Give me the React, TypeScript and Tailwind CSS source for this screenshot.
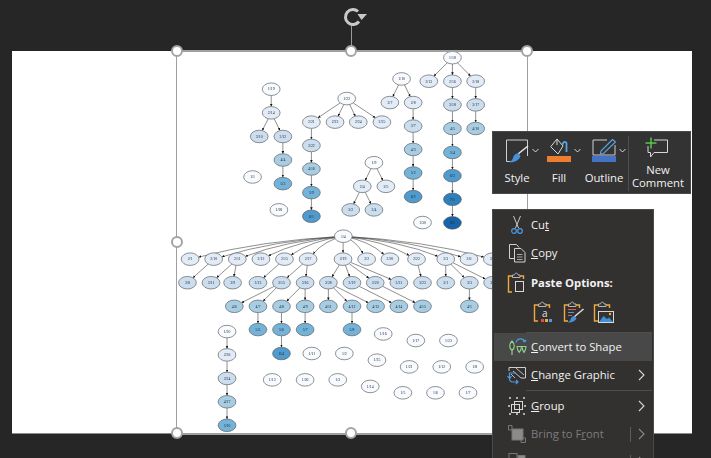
import type { ReactNode } from "react";

type GraphNode = [label: string, x: number, y: number];

const nodes: GraphNode[] = [
  ["1/18", 452.7, 57.7], ["2/13", 429, 81.3], ["2/16", 452.7, 81.3], ["2/18", 476, 81.3],
  ["3/18", 452.7, 105], ["3/17", 476, 105], ["4/5", 452.7, 128.7], ["4/10", 476, 128.7],
  ["5/4", 452.7, 152.7], ["6/3", 452.7, 176], ["7/1", 452.7, 199.7], ["8/1", 452.7, 223.3],
  ["1/10", 401.7, 79], ["2/7", 390, 102.7], ["2/8", 413.3, 102.7], ["3/7", 413.3, 126.3],
  ["4/3", 413.3, 149.7], ["5/2", 413.3, 173.3], ["6/2", 413.3, 197],
  ["1/22", 346.7, 98.7], ["2/21", 311.3, 122.3], ["2/23", 335, 122.3], ["2/24", 358.3, 122.3], ["2/25", 382, 122.3],
  ["3/22", 311.3, 145.7], ["4/16", 311.3, 169.3], ["5/9", 311.3, 193], ["6/1", 311.3, 216.7],
  ["1/19", 271, 89.3], ["2/14", 271, 113], ["3/10", 259, 136.7], ["3/12", 282.7, 136.7],
  ["4/4", 282.7, 160.3], ["5/3", 282.7, 184], ["1/1", 252.3, 177.3], ["1/28", 278.7, 210.3],
  ["1/9", 374, 163], ["2/4", 362.3, 186.7], ["2/5", 386, 186.7], ["3/2", 350.7, 210.3], ["3/4", 374, 210.3],
  ["1/30", 422.7, 223], ["1/4", 343.3, 236.7],
  ["2/1", 189.7, 259.7], ["2/10", 213.3, 259.7], ["2/11", 237, 259.7], ["2/12", 260.7, 259.7],
  ["2/15", 284.3, 259.7], ["2/17", 308, 259.7], ["2/19", 343, 259.7], ["2/2", 366.7, 259.7],
  ["2/20", 390, 259.7], ["2/22", 416.7, 259.7], ["2/3", 446, 259.7], ["2/6", 469.3, 259.7], ["2/9", 492.7, 259.7],
  ["3/8", 187, 283.3], ["3/11", 210.7, 283.3], ["3/9", 232.3, 283.3], ["3/13", 257.7, 283.3],
  ["3/15", 281.3, 283.3], ["3/16", 305, 283.3], ["3/28", 328.3, 283.3], ["3/19", 352, 283.3],
  ["3/20", 375.3, 283.3], ["3/21", 399, 283.3], ["3/23", 422.7, 283.3], ["3/1", 446, 283.3],
  ["3/3", 469.7, 283.3], ["3/5", 493, 283.3],
  ["4/6", 234, 307], ["4/7", 257.7, 307], ["4/8", 281.3, 307], ["4/9", 305, 307], ["4/11", 328.3, 307],
  ["4/12", 352, 307], ["4/13", 375.7, 307], ["4/14", 399, 307], ["4/15", 422.7, 307], ["4/1", 469.7, 307],
  ["5/5", 257.7, 330.3], ["5/6", 281.3, 330.3], ["5/7", 305, 330.3], ["5/8", 352, 330.3],
  ["1/20", 226.7, 332.3], ["2/26", 226.7, 355.7], ["3/24", 226.7, 379.3], ["4/17", 226.7, 402.7], ["5/10", 226.7, 426.3],
  ["6/4", 281.3, 354.3], ["1/16", 383.3, 334.7], ["1/17", 416, 341.3], ["1/23", 448.7, 341.3],
  ["1/11", 311.7, 354.3], ["1/2", 344.3, 354.3], ["1/25", 377, 361], ["1/21", 409.3, 367.7],
  ["1/12", 442, 367.7], ["1/8", 475, 367.7], ["1/13", 272, 380.7], ["1/26", 305, 380.7],
  ["1/3", 337.7, 380.7], ["1/14", 370.3, 387.3], ["1/5", 403, 393.7], ["1/6", 435.7, 393.7], ["1/7", 468.3, 393.7],
];

const edges: Record<string, string[]> = {
  "1/18": ["2/13", "2/16", "2/18"], "2/16": ["3/18"], "2/18": ["3/17"], "3/18": ["4/5"], "3/17": ["4/10"],
  "4/5": ["5/4"], "5/4": ["6/3"], "6/3": ["7/1"], "7/1": ["8/1"],
  "1/10": ["2/7", "2/8"], "2/8": ["3/7"], "3/7": ["4/3"], "4/3": ["5/2"], "5/2": ["6/2"],
  "1/22": ["2/21", "2/23", "2/24", "2/25"], "2/21": ["3/22"], "3/22": ["4/16"], "4/16": ["5/9"], "5/9": ["6/1"],
  "1/19": ["2/14"], "2/14": ["3/10", "3/12"], "3/12": ["4/4"], "4/4": ["5/3"],
  "1/9": ["2/4", "2/5"], "2/4": ["3/2", "3/4"],
  "2/10": ["3/8"], "2/11": ["3/11", "3/9"], "2/15": ["3/13"], "2/17": ["3/15", "3/16"],
  "2/19": ["3/28", "3/19", "3/20", "3/21"], "2/22": ["3/23"], "2/3": ["3/1", "3/3", "3/5"],
  "3/15": ["4/6", "4/7"], "3/16": ["4/8", "4/9"], "3/28": ["4/11", "4/12", "4/13"], "3/19": ["4/14"], "3/20": ["4/15"],
  "3/3": ["4/1"], "4/7": ["5/5"], "4/8": ["5/6"], "4/9": ["5/7"], "4/12": ["5/8"], "5/6": ["6/4"],
  "1/20": ["2/26"], "2/26": ["3/24"], "3/24": ["4/17"], "4/17": ["5/10"],
};

const rootChildren = ["2/1", "2/10", "2/11", "2/12", "2/15", "2/17", "2/19", "2/2", "2/20", "2/22", "2/3", "2/6", "2/9"];

const depthFill: Record<string, string> = {
  "1": "#f7fbff", "2": "#e1ecf8", "3": "#cbdef0", "4": "#a6cde3", "5": "#74b3d9", "6": "#4f9bcd", "7": "#2f7fbc", "8": "#1764ab",
};

const find = (label: string) => nodes.find((n) => n[0] === label) as GraphNode;

// clip a segment to the two ellipses so the arrow lands on the rim
function rim(ax: number, ay: number, bx: number, by: number) {
  const dx = bx - ax;
  const dy = by - ay;
  const t = 1 / Math.sqrt((dx * dx) / 81 + (dy * dy) / 40);
  return [ax + dx * t, ay + dy * t];
}

function Graph() {
  return (
    <svg className="block w-full h-full" viewBox="12 51 680 383">
      <defs>
        <marker id="tip" markerWidth="3" markerHeight="3" refX="2.6" refY="1.3" orient="auto" markerUnits="userSpaceOnUse">
          <path d="M0 0L2.6 1.3L0 2.6Z" fill="#111" />
        </marker>
      </defs>
      <g className="blur-[0.35px]">
        {Object.entries(edges).flatMap(([from, tos]) =>
          tos.map((to) => {
            const a = find(from);
            const b = find(to);
            const [x1, y1] = rim(a[1], a[2], b[1], b[2]);
            const [x2, y2] = rim(b[1], b[2], a[1], a[2]);
            return <line key={from + to} x1={x1} y1={y1} x2={x2} y2={y2} stroke="#444" strokeWidth="0.6" markerEnd="url(#tip)" />;
          })
        )}
        {rootChildren.map((to) => {
          const a = find("1/4");
          const b = find(to);
          const [x2, y2] = rim(b[1], b[2], b[1] + (a[1] - b[1]) * 0.6, a[2] + 1);
          const cx = a[1] + (b[1] - a[1]) * 0.55;
          const cy = a[2] + (b[2] - a[2]) * 0.2;
          return <path key={to} d={`M${a[1]} ${a[2]}Q${cx} ${cy} ${x2} ${y2}`} fill="none" stroke="#444" strokeWidth="0.6" markerEnd="url(#tip)" />;
        })}
        {nodes.map(([label, x, y]) => (
          <g key={label}>
            <ellipse cx={x} cy={y} rx="8.9" ry="6.3" fill={depthFill[label.split("/")[0]]} stroke="#555" strokeWidth="0.65" />
            <text x={x} y={y + 1.3} textAnchor="middle" fontSize="3.8" fill="#222" fontFamily="'Liberation Serif', serif">
              {label}
            </text>
          </g>
        ))}
      </g>
    </svg>
  );
}

function Handle({ className }: { className: string }) {
  return <div className={`absolute w-[12px] h-[12px] rounded-full bg-white border-[2.5px] border-[#a3a3a3] ${className}`} />;
}

function Chevron() {
  return (
    <svg className="w-[7px] h-[5px] shrink-0" viewBox="0 0 7 5" fill="none" stroke="#d8d8d8" strokeWidth="1">
      <path d="M0.5 1L3.5 4L6.5 1" />
    </svg>
  );
}

function StyleIcon() {
  return (
    <svg className="w-[24px] h-[24px]" viewBox="0 1 24 24" fill="none">
      <path d="M9 23.5H1.5V2H22.5V18" stroke="#cfcfcf" />
      <path d="M23 8L13 16" stroke="#e4e4e4" strokeWidth="1.6" />
      <path d="M14 15.5C11 15 8.5 17 8 20C7.5 22 6 23 4 24C8 25 14 23 15.5 18Z" fill="#4a90d9" />
    </svg>
  );
}

function FillIcon() {
  return (
    <svg className="w-[24px] h-[17px]" viewBox="0 0 24 17" fill="none">
      <path d="M10 0L16 7L11 15L3.7 7.7Z" stroke="#d8d8d8" />
      <path d="M10 0V6" stroke="#d8d8d8" />
      <path d="M15.3 6C16 3 18 2 19.5 4V13" stroke="#5ba3e0" strokeWidth="1.8" />
    </svg>
  );
}

function OutlineIcon() {
  return (
    <svg className="w-[24px] h-[17px]" viewBox="0 0 24 17" fill="none">
      <path d="M1 16V1H15M23 6V16H1" stroke="#cfcfcf" />
      <path d="M20.5 0.5L23.5 3L11.5 14.5L8.5 15L9 12Z" fill="#333" stroke="#5ba3e0" strokeWidth="1.2" />
    </svg>
  );
}

function CommentIcon() {
  return (
    <svg className="w-[26px] h-[22px]" viewBox="0 0 26 22" fill="none">
      <path d="M9 3H22.5V15.5H9L5.5 20V15.5H3V9" stroke="#d8d8d8" />
      <path d="M6 0.5V11.5M0.5 6H11.5" stroke="#58c94f" strokeWidth="1.5" />
    </svg>
  );
}

function ToolButton({ icon, label, color, className = "" }: { icon: ReactNode; label: string; color?: string; className?: string }) {
  return (
    <div className={`flex flex-col items-center w-[42px] ${className}`}>
      <div className="h-[24px] flex items-start pl-[10px] gap-[3px]">
        <div className="w-[24px] flex flex-col">
          {icon}
          {color && <div className={`h-[6px] w-[24px] ${color}`} />}
        </div>
        <div className="pt-[9px]">
          <Chevron />
        </div>
      </div>
      <div className="mt-[7px] text-[11.3px] leading-4">{label}</div>
    </div>
  );
}

function CutIcon() {
  return (
    <svg className="w-[20px] h-[20px]" viewBox="0 0 20 20" fill="none">
      <path d="M6.5 1L11.5 13M13.5 1L8.5 13" stroke="#c8c8c8" />
      <circle cx="7" cy="16" r="2.3" stroke="#4a9be0" strokeWidth="1.2" />
      <circle cx="13" cy="16" r="2.3" stroke="#4a9be0" strokeWidth="1.2" />
    </svg>
  );
}

function CopyIcon() {
  return (
    <svg className="w-[20px] h-[20px]" viewBox="0 0 20 20" fill="none" stroke="#d0d0d0">
      <path d="M8 15.5H2.5V1.5H9.5L12 4.5" />
      <path d="M7.5 5.5H14L18 9.5V19H7.5Z" />
      <path d="M10 11.5H15.5M10 14H15.5M10 16.5H15.5" stroke="#a8a8a8" />
    </svg>
  );
}

function Clipboard({ children }: { children?: ReactNode }) {
  return (
    <svg className="w-[21px] h-[22px]" viewBox="0 0 21 22" fill="none">
      <path d="M5 4H1.5V20H5M13 4H16.5V7" stroke="#f0a93b" strokeWidth="1.4" />
      <path d="M5.5 5.5V3H7.5C7.5 0.5 11 0.5 11 3H13V5.5Z" stroke="#b5b5b5" />
      {children}
    </svg>
  );
}

function PasteIcon() {
  return (
    <Clipboard>
      <rect x="8.5" y="9.5" width="8" height="10" stroke="#d8d8d8" />
    </Clipboard>
  );
}

function PasteTextIcon() {
  return (
    <Clipboard>
      <text x="9" y="15.5" fontSize="10" fill="#e0e0e0" fontFamily="'Open Sans', sans-serif">a</text>
      <rect x="8" y="18" width="3" height="3" fill="#e74c3c" />
      <rect x="12" y="18" width="3" height="3" fill="#f0a93b" />
      <rect x="16" y="18" width="3" height="3" fill="#4a9be0" />
    </Clipboard>
  );
}

function PasteFormatIcon() {
  return (
    <Clipboard>
      <path d="M5 8.5H13M5 14.5H9" stroke="#e25b4e" strokeWidth="1.1" />
      <path d="M5 11.5H11" stroke="#4a9be0" strokeWidth="1.1" />
      <path d="M20.5 8L11 16" stroke="#e0e0e0" strokeWidth="1.5" />
      <path d="M11.5 15C9 15 8 17 7.5 18.5C7 20 6 20.5 4.5 21.5C8 22 12 20.5 13.5 17.5Z" fill="#4a90d9" />
    </Clipboard>
  );
}

function PastePictureIcon() {
  return (
    <Clipboard>
      <rect x="5.5" y="10.5" width="15" height="11" fill="#333" stroke="#d8d8d8" />
      <path d="M6 21L10.5 15L14 18L16 16.5L20 21Z" fill="#3f8fd8" />
      <circle cx="17" cy="13" r="1.2" fill="#f0a93b" />
    </Clipboard>
  );
}

function ConvertIcon() {
  return (
    <svg className="w-[20px] h-[20px]" viewBox="0 0 20 20" fill="none">
      <path d="M5 4C2 7 2 11 5 13.5C8 11 8 7 5 4ZM5 13.5V18" stroke="#8fd18a" strokeWidth="1.2" />
      <path d="M9 5.5C10 1 16.5 0.5 18 5M18 5L15.8 4M18 5L19 2.8" stroke="#4a9be0" strokeWidth="1.2" />
      <path d="M10 9.5H14.5C14.5 12 13.5 14 12.2 15.5C11 14 10 12 10 9.5Z" stroke="#8fd18a" strokeWidth="1.1" />
      <path d="M15 9.5H19C19 12 18 14 17 15.5C16 14 15 12 15 9.5Z" stroke="#8fd18a" strokeWidth="1.1" />
    </svg>
  );
}

function ChangeIcon() {
  return (
    <svg className="w-[20px] h-[20px]" viewBox="0 0 20 20" fill="none">
      <path d="M2 6V2.5H18.5V13H14" stroke="#cfcfcf" />
      <path d="M6 6L14 13M9 3L17 10M4 9L8 13" stroke="#c0c0c0" />
      <path d="M9 8H2.5V13M0.5 11L2.5 13.5L4.5 11" stroke="#4a9be0" strokeWidth="1.2" />
      <path d="M11 17H6C3 17 2.5 15.5 2.5 13.5M9 15L11 17L9 19" stroke="#4a9be0" strokeWidth="1.2" />
    </svg>
  );
}

function GroupIcon() {
  return (
    <svg className="w-[20px] h-[20px]" viewBox="0 0 20 20" fill="none" stroke="#d8d8d8">
      <rect x="7.5" y="5.5" width="8" height="8" />
      <rect x="4.5" y="8.5" width="8" height="8" />
      <path d="M2 2H4M9 2H11M16 2H18M2 18H4M9 18H11M16 18H18M2 9V11M18 9V11" strokeWidth="1.5" />
    </svg>
  );
}

function FrontIcon() {
  return (
    <svg className="w-[20px] h-[20px]" viewBox="0 0 20 20" fill="none" stroke="#777">
      <path d="M5 6V1.5H1.5V6M1.5 6H5M14 14V18.5H18.5V14H14Z" />
      <rect x="5" y="5" width="11" height="11" fill="#8b8b8b" />
    </svg>
  );
}

function BackIcon() {
  return (
    <svg className="w-[20px] h-[20px]" viewBox="0 0 20 20" fill="none" stroke="#777">
      <rect x="2" y="1.5" width="8" height="8" />
      <rect x="11" y="3.5" width="7" height="7" fill="#8b8b8b" />
    </svg>
  );
}

function MenuArrow({ dim }: { dim?: boolean }) {
  return (
    <svg className="w-[7px] h-[12px]" viewBox="0 0 7 12" fill="none" stroke={dim ? "#8a8a8a" : "#d8d8d8"} strokeWidth="1.1">
      <path d="M1 1L6 6L1 11" />
    </svg>
  );
}

function MenuItem({ icon, children, arrow, active, disabled }: { icon: ReactNode; children: ReactNode; arrow?: boolean; active?: boolean; disabled?: boolean }) {
  return (
    <div className={`relative h-[28px] flex items-center ${active ? "bg-[#484848]" : ""} ${disabled ? "text-[#7c7c7c]" : "text-[#f2f2f2]"}`}>
      <div className="w-[36px] pl-[10px] flex justify-center shrink-0">{icon}</div>
      <div className="pl-[1px] flex-1">{children}</div>
      {arrow && (
        <div className="flex items-center pr-[7px]">
          {disabled && <div className="w-px h-[15px] bg-[#5c5c5c] mr-[7px]" />}
          <MenuArrow dim={disabled} />
        </div>
      )}
    </div>
  );
}

function Divider() {
  return <div className="h-px bg-[#4e4e4e] ml-[32px]" />;
}

export default function App() {
  return (
    <div className="relative w-[711px] h-[458px] overflow-hidden bg-[#262626] pt-[51px] pl-[12px] font-['Open_Sans',sans-serif]">
      <div className="w-[680px] h-[383px] bg-white border-b border-[#8c8c8c]">
        <Graph />
      </div>

      {/* selection frame */}
      <div className="absolute left-[176px] top-[50px] w-[352px] h-[385px] border-x border-y-2 border-[#a0a0a0]" />
      <div className="absolute left-[351px] top-[25px] w-px h-[25px] bg-[#9a9a9a]" />
      <Handle className="left-[171px] top-[45px]" />
      <Handle className="left-[345px] top-[45px]" />
      <Handle className="left-[521px] top-[45px]" />
      <Handle className="left-[171px] top-[236px]" />
      <Handle className="left-[171px] top-[427px]" />
      <Handle className="left-[345px] top-[427px]" />
      <Handle className="left-[521px] top-[427px]" />
      <svg className="absolute left-[341px] top-[5px] w-[27px] h-[22px]" viewBox="0 0 27 22" fill="none">
        <path d="M18 16.5A7.5 7.5 0 1 1 17 6.5" stroke="#c9c9c9" strokeWidth="3" />
        <path d="M16.5 9H26L20.5 15Z" fill="#c9c9c9" />
      </svg>

      {/* mini toolbar */}
      <div className="absolute left-[492px] top-[131px] w-[199px] h-[63px] bg-[#333333] border border-[#4a4a4a] text-[#f2f2f2] flex pl-[3px] pr-[3px] pt-[7px]">
        <ToolButton icon={<StyleIcon />} label="Style" />
        <ToolButton icon={<FillIcon />} label="Fill" color="bg-[#ed7d31]" />
        <ToolButton icon={<OutlineIcon />} label="Outline" color="bg-[#4472c4]" className="ml-[3px]" />
        <div className="w-px h-[55px] -mt-[3px] ml-[3px] bg-[#4e4e4e]" />
        <div className="flex-1 flex flex-col items-center -mt-[2px]">
          <CommentIcon />
          <div className="text-[11.3px] leading-[13px] mt-[4px] text-center">
            <div>New</div>
            <div>Comment</div>
          </div>
        </div>
      </div>

      {/* context menu */}
      <div className="absolute left-[492px] top-[209px] w-[162px] bg-[#323130] border border-[#4a4a4a] p-[1px] text-[11.3px]">
        <MenuItem icon={<CutIcon />}>Cu<span className="underline">t</span></MenuItem>
        <MenuItem icon={<CopyIcon />}><span className="underline">C</span>opy</MenuItem>
        <div className="mt-[2px]">
          <MenuItem icon={<PasteIcon />}><span className="font-bold">Paste Options:</span></MenuItem>
        </div>
        <div className="h-[35px] pl-[39px] pt-[4px] flex items-start gap-[9px]">
          <PasteTextIcon />
          <PasteFormatIcon />
          <PastePictureIcon />
        </div>
        <Divider />
        <MenuItem icon={<ConvertIcon />} active><span className="underline">C</span>onvert to Shape</MenuItem>
        <MenuItem icon={<ChangeIcon />} arrow><span className="underline">C</span>hange Graphic</MenuItem>
        <div className="my-[1px]"><Divider /></div>
        <MenuItem icon={<GroupIcon />} arrow><span className="underline">G</span>roup</MenuItem>
        <MenuItem icon={<FrontIcon />} arrow disabled>Bring to F<span className="underline">r</span>ont</MenuItem>
        <MenuItem icon={<BackIcon />} arrow disabled>Send to Bac<span className="underline">k</span></MenuItem>
      </div>
    </div>
  );
}
